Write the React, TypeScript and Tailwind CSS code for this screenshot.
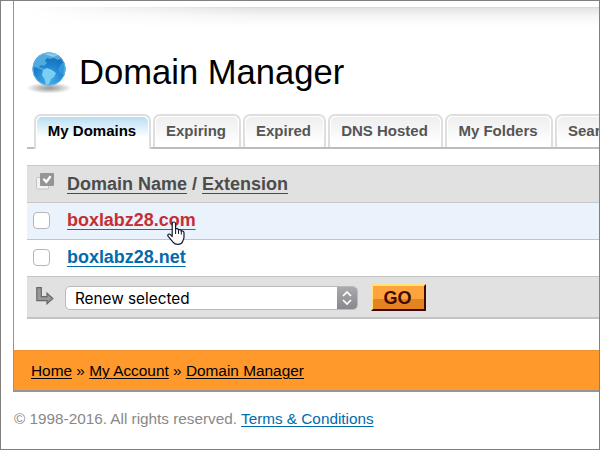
import React from "react";

const tabs = [
  { label: "Expiring", width: "w-[90px]" },
  { label: "Expired", width: "w-[85px]" },
  { label: "DNS Hosted", width: "w-[117px]" },
  { label: "My Folders", width: "w-[110px]" },
  { label: "Search", width: "w-[80px]" },
];

function Globe() {
  return (
    <svg className="-mt-px h-[46px] w-[46px] shrink-0" viewBox="0 0 46 46">
      <defs>
        <radialGradient id="sea" cx="50%" cy="85%" r="85%">
          <stop offset="0" stopColor="#4ab0e8" />
          <stop offset="0.55" stopColor="#1d82cf" />
          <stop offset="1" stopColor="#1468b4" />
        </radialGradient>
        <radialGradient id="shade">
          <stop offset="0" stopColor="#989898" />
          <stop offset="0.45" stopColor="#c0c0c0" />
          <stop offset="1" stopColor="#ffffff" />
        </radialGradient>
        <clipPath id="ball"><circle cx="22" cy="19" r="16.4" /></clipPath>
      </defs>
      <ellipse cx="22" cy="38" rx="22.5" ry="5.5" fill="url(#shade)" />
      <circle cx="22" cy="19" r="16.5" fill="url(#sea)" />
      <g clipPath="url(#ball)">
        <path d="M6 15L9 8 15 4 22 2 28 4 35 8 31 10 27 8 23 9 20 8 18 11 20 13 17 16 14 15 12 17 15 18 18 19 15 20 11 18 7 17Z" fill="#4faae0" />
        <path d="M16 20L20 18 25 20 29 23 27 27 24 29 22 34 19 36 18 30 15 25Z" fill="#7ccff3" />
        <path d="M34 14L38 12 41 18 38 25 34 24 31 20Z" fill="#3299da" />
        <path d="M15 3Q23 0 32 5L26 7 20 5Z" fill="#a8daf4" opacity=".7" />
      </g>
      <circle cx="22" cy="19" r="16.1" fill="none" stroke="#69b5e2" strokeWidth=".9" />
    </svg>
  );
}

function SelectAllIcon() {
  return (
    <svg className="mt-[7px] ml-[9px] h-[17px] w-[18px]" viewBox="0 0 18 17">
      <rect x=".5" y="4.5" width="12" height="11.5" rx="1" fill="#f2f2f2" stroke="#c3c3c3" />
      <rect x="4" y="0" width="14" height="13" rx="1" fill="#959595" />
      <path d="M7.5 5.8L10.3 9 14.6 3.2" fill="none" stroke="#fff" strokeWidth="2.3" />
    </svg>
  );
}

function ArrowIcon() {
  return (
    <svg className="mt-[10px] ml-[9px] h-[18px] w-[18px]" viewBox="0 0 18 18">
      <path d="M.8.7H5.3V9.6H11V6.2L16.8 11.5 11 16.8V13.6H.8Z" fill="#989898" stroke="#686868" strokeWidth="1.2" />
    </svg>
  );
}

function Pointer() {
  return (
    <svg className="absolute top-[18px] left-[100px] h-[25px] w-[19px]" viewBox="0 0 19 25">
      <path
        d="M5.2 15.5V3Q5.2 1 7 1 8.6 1 8.6 3V8.3Q9 7.2 10.3 7.6 11.5 8 11.5 9.2 12.2 8.3 13.3 8.8 14.3 9.3 14.3 10.4 15.1 9.6 16.1 10.2 17 10.8 17 12V16Q17 18 15.8 20 14.8 23.3 11 23.3 7.6 23.3 6.2 21.3L1.2 15.3Q.3 14 1.4 13.2 2.6 12.6 3.8 13.8Z"
        fill="#fff" stroke="#16182b" strokeWidth="1.2" strokeLinejoin="round"
      />
      <path d="M8.6 8V13M11.5 9.3V13M14.3 10.5V13.5" stroke="#16182b" strokeWidth="1" />
    </svg>
  );
}

function Row({ name, color, active }: { name: string; color: string; active?: boolean }) {
  return (
    <div className={`flex h-[37px] border-b border-[#c4c4c4] text-[17.95px] font-bold ${active ? "bg-[#eaf2fb]" : "bg-white"}`}>
      <div className="w-10">
        <div className="mt-[9px] ml-[6px] h-[17px] w-[17px] rounded-[4px] border border-[#b5b5b5] bg-white" />
      </div>
      <div className="relative">
        <a className={`mt-[5px] block leading-[24px] underline decoration-[1px] underline-offset-[3px] ${color}`}>{name}</a>
        {active && <Pointer />}
      </div>
    </div>
  );
}

export default function App() {
  return (
    <div className="h-[450px] w-[600px] overflow-hidden border border-[#808080] bg-white font-['Liberation_Sans',Arial,sans-serif] text-black">
      <main className="ml-[12px] h-[391px] border-b-2 border-l border-[#949499] pt-[6px]">
        <div className="ml-[13px]">
          <div className="h-5 border-t border-[#d9d9d9] bg-linear-to-b from-[#e3e3e3] via-[#f5f5f5] via-40% to-white mask-l-from-60% mask-l-to-100%" />
          <header className="mt-[24px] flex h-[46px] items-start">
            <Globe />
            <h1 className="ml-[6px] pt-px text-[34.6px] leading-[40px]">Domain Manager</h1>
          </header>
          <nav className="mt-[17px] flex h-[35px] w-[640px] items-start border-b-2 border-[#bdbdbd] pl-[7px] text-[15px] font-bold">
            <div className="h-[35px] w-[117px] rounded-t-[7px] border-2 border-b-0 border-[#dedede] bg-white px-[1px] pt-[1px]">
              <div className="h-[31px] rounded-t-[5px] bg-linear-to-b from-[#b8def2] to-white to-65% pr-px text-center leading-[28px]">My Domains</div>
            </div>
            {tabs.map((t) => (
              <div key={t.label} className={`h-[33px] pl-[2px] ${t.width} shrink-0`}>
                <div className="h-full rounded-t-[7px] border-2 border-b-0 border-[#dedede] bg-white px-[1px] pt-[1px]">
                  <div className="h-[29px] rounded-t-[5px] bg-linear-to-b from-[#eeeeee] to-white to-90% pr-[2px] text-center leading-[28px] whitespace-nowrap text-[#555]">{t.label}</div>
                </div>
              </div>
            ))}
          </nav>
          <section className="mt-[16px] border-t border-[#c8c8c8]">
            <div className="flex h-[37px] border-b border-[#c8c8c8] bg-[#e1e1e1] text-[18px] font-bold text-[#4c4c4c]">
              <div className="w-10"><SelectAllIcon /></div>
              <div className="mt-[6px] leading-[24px]">
                <span className="underline decoration-[1px] underline-offset-[3px]">Domain Name</span> / <span className="underline decoration-[1px] underline-offset-[3px]">Extension</span>
              </div>
            </div>
            <Row name="boxlabz28.com" color="text-[#c52e32]" active />
            <Row name="boxlabz28.net" color="text-[#006bad]" />
            <div className="flex h-[42px] border-b-2 border-[#c3c3c3] bg-[#e1e1e1]">
              <div className="w-[38px]"><ArrowIcon /></div>
              <div className="mt-[9px] flex h-[24px] w-[293px] overflow-hidden rounded-[5px] border border-[#bababa] bg-white font-[Inter,sans-serif] text-[15.3px] leading-[23px]">
                <span className="grow pl-[9px]">Renew selected</span>
                <span className="flex w-[20px] items-center justify-center bg-linear-to-b from-[#aaaaad] to-[#89898d]">
                  <svg className="h-4 w-3" viewBox="0 0 12 16" fill="none" stroke="#fff" strokeWidth="1.7">
                    <path d="M2 6L6 2 10 6M2 10L6 14 10 10" />
                  </svg>
                </span>
              </div>
              <button className="mt-[7px] ml-[13px] h-[27px] w-[55px] border-2 border-t-[#ffe47b] border-r-[#400907] border-b-[#400907] border-l-[#ffe47b] bg-linear-to-b from-[#ffa43c] from-55% to-[#e38420] to-55% pr-[2px] text-[18px] leading-[22px] font-bold text-[#400907]">GO</button>
            </div>
          </section>
        </div>
        <div className="mt-[31px] h-[40px] border-t border-[#e8932f] bg-[#ff992b] pl-[17px] text-[15.4px] leading-[39px]">
          <a className="underline decoration-[1px] underline-offset-[2px]">Home</a> » <a className="underline decoration-[1px] underline-offset-[2px]">My Account</a> » <a className="underline decoration-[1px] underline-offset-[2px]">Domain Manager</a>
        </div>
      </main>
      <footer className="mt-[16px] pl-[13px] text-[15.3px] leading-[22px] text-[#888]">
        © 1998-2016. All rights reserved. <a className="text-[#006bad] underline decoration-[1px] underline-offset-[2px]">Terms &amp; Conditions</a>
      </footer>
    </div>
  );
}
